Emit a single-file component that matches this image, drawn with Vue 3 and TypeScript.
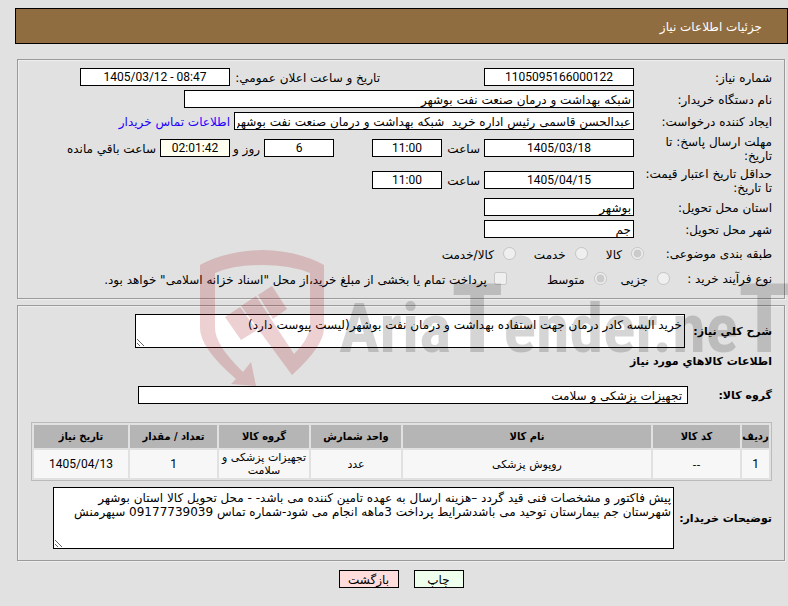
<script setup lang="ts">
import { ref } from 'vue'

interface Option {
  label: string
  value: string
}

interface Item {
  row: number
  code: string
  name: string
  unit: string
  group: string
  quantity: number
  date: string
}

const categories: Option[] = [
  { label: 'کالا', value: 'goods' },
  { label: 'خدمت', value: 'service' },
  { label: 'کالا/خدمت', value: 'both' },
]
const processes: Option[] = [
  { label: 'جزیی', value: 'minor' },
  { label: 'متوسط', value: 'medium' },
]
const category = ref('goods')
const process = ref('medium')

const items: Item[] = [
  {
    row: 1,
    code: '--',
    name: 'روپوش پزشکی',
    unit: 'عدد',
    group: 'تجهیزات پزشکی و سلامت',
    quantity: 1,
    date: '1405/04/13',
  },
]

const buyerNotes =
  'پیش فاکتور و مشخصات فنی قید گردد –هزینه ارسال به عهده تامین کننده می باشد- - محل تحویل کالا استان بوشهر شهرستان جم بیمارستان توحید می باشدشرایط پرداخت 3ماهه انجام می شود-شماره تماس 09177739039 سپهرمنش'
</script>

<template>
  <main class="page" dir="rtl">
    <header class="title">
      <h1>جزئیات اطلاعات نیاز</h1>
    </header>

    <section class="panel request">
      <div class="row">
        <label class="label" for="number">شماره نیاز:</label>
        <input id="number" class="w150 num" value="1105095166000122" readonly />
        <label class="announce" for="announced">تاریخ و ساعت اعلان عمومي:</label>
        <input id="announced" class="w150 num" dir="ltr" value="1405/03/12 - 08:47" readonly />
      </div>
      <div class="row">
        <label class="label" for="agency">نام دستگاه خریدار:</label>
        <input id="agency" class="w450" value="شبکه بهداشت و درمان صنعت نفت بوشهر" readonly />
      </div>
      <div class="row">
        <label class="label" for="creator">ایجاد کننده درخواست:</label>
        <input
          id="creator"
          class="w400"
          value="عبدالحسن قاسمی رئیس اداره خرید  شبکه بهداشت و درمان صنعت نفت بوشهر"
          readonly
        />
        <a href="#">اطلاعات تماس خریدار</a>
      </div>
      <div class="row tall">
        <label class="label" for="deadline">مهلت ارسال پاسخ: تا تاریخ:</label>
        <input id="deadline" class="w150 num" value="1405/03/18" readonly />
        <label class="hour" for="deadline-time">ساعت</label>
        <input id="deadline-time" class="w70 num" value="11:00" readonly />
        <input id="days" class="w70 num days" value="6" readonly />
        <label class="and" for="days">روز و</label>
        <input id="left" class="w70 num left" value="02:01:42" readonly />
        <label for="left">ساعت باقي مانده</label>
      </div>
      <div class="row tall">
        <label class="label" for="validity">حداقل تاریخ اعتبار قیمت: تا تاریخ:</label>
        <input id="validity" class="w150 num" value="1405/04/15" readonly />
        <label class="hour" for="validity-time">ساعت</label>
        <input id="validity-time" class="w70 num" value="11:00" readonly />
      </div>
      <div class="row">
        <label class="label" for="province">استان محل تحویل:</label>
        <input id="province" class="w150" value="بوشهر" readonly />
      </div>
      <div class="row">
        <label class="label" for="city">شهر محل تحویل:</label>
        <input id="city" class="w150" value="جم" readonly />
      </div>
      <div class="row options category" role="radiogroup" aria-labelledby="category-label">
        <span id="category-label">طبقه بندی موضوعی:</span>
        <label v-for="o in categories" :key="o.value" class="option">
          <input v-model="category" type="radio" name="category" :value="o.value" disabled />
          <span>{{ o.label }}</span>
        </label>
      </div>
      <div class="row options process" role="radiogroup" aria-labelledby="process-label">
        <span id="process-label">نوع فرآیند خرید :</span>
        <label v-for="o in processes" :key="o.value" class="option">
          <input v-model="process" type="radio" name="process" :value="o.value" disabled />
          <span>{{ o.label }}</span>
        </label>
        <label class="option treasury">
          <input type="checkbox" disabled />
          <span>پرداخت تمام یا بخشی از مبلغ خرید،از محل "اسناد خزانه اسلامی" خواهد بود.</span>
        </label>
      </div>
    </section>

    <section class="panel goods">
      <div class="field overview">
        <label for="summary">شرح کلي نياز:</label>
        <textarea id="summary" class="summary">خرید البسه کادر درمان جهت استفاده بهداشت و درمان نفت بوشهر(لیست پیوست دارد)</textarea>
      </div>
      <h2>اطلاعات کالاهاي مورد نياز</h2>
      <div class="field group">
        <label for="group">گروه کالا:</label>
        <input id="group" value="تجهیزات پزشکی و سلامت" readonly />
      </div>
      <table>
        <thead>
          <tr>
            <th class="c-row">ردیف</th>
            <th class="c-code">کد کالا</th>
            <th>نام کالا</th>
            <th class="c-unit">واحد شمارش</th>
            <th class="c-unit">گروه کالا</th>
            <th class="c-code">تعداد / مقدار</th>
            <th class="c-date">تاریخ نیاز</th>
          </tr>
        </thead>
        <tbody>
          <tr v-for="i in items" :key="i.row">
            <td class="num">{{ i.row }}</td>
            <td>{{ i.code }}</td>
            <td>{{ i.name }}</td>
            <td>{{ i.unit }}</td>
            <td>{{ i.group }}</td>
            <td class="num">{{ i.quantity }}</td>
            <td class="num">{{ i.date }}</td>
          </tr>
        </tbody>
      </table>
      <div class="field remarks">
        <label for="notes">توضیحات خریدار:</label>
        <textarea id="notes" class="notes" :value="buyerNotes"></textarea>
      </div>
    </section>

    <div class="actions">
      <button type="button" class="print">چاپ</button>
      <button type="button" class="back">بازگشت</button>
    </div>

    <svg class="watermark" width="588" height="140" viewBox="0 0 588 140" direction="ltr" aria-hidden="true">
      <g fill="#a5141e" fill-opacity="0.2">
        <path
          d="M0 15Q25 1 62 0Q99 1 124 15V78Q124 96 92 125L41 56L56 46L94 104Q110 88 110 75V23Q90 15 62 15Q34 15 15 23V78Q15 95 43 122L51 112L56 136L31 134L36 129Q0 98 0 78Z"
        />
        <path d="M25 67L40 57L57 80L41 90Z" />
        <path d="M58 45L72 36L87 59L73 69Z" />
      </g>
      <text class="brand" x="139" y="102" opacity="0.16">Aria<tspan class="cap">T</tspan>ender.ne<tspan class="cap">T</tspan></text>
    </svg>
  </main>
</template>

<style>
body {
  margin: 0;
  background: #e1e1e1;
}
</style>

<style scoped>
.page {
  position: relative;
  box-sizing: border-box;
  padding: 8px 0 18px;
  overflow: hidden;
  color: #000;
  font: 12px/14px 'DejaVu Sans', sans-serif;
}
.title {
  box-sizing: border-box;
  display: flex;
  align-items: center;
  height: 36px;
  margin-left: 15px;
  padding: 2px 25px 0;
  border: 1px solid #000;
  background: #8f6d40;
  color: #fff;
}
h1 {
  margin: 0;
  font-size: 12px;
  font-weight: normal;
}
.panel {
  margin: 0 3px 6px 17px;
  border: 1px solid #9a9a9a;
  box-shadow: 1px 1px 0 #eee, inset 1px 1px 0 #eee;
}
.request {
  margin-top: 15px;
  padding: 6px 12px 8px;
}
.goods {
  margin-bottom: 9px;
  padding: 8px 12px 11px 13px;
}
.row {
  display: flex;
  align-items: center;
  gap: 4px;
  height: 22px;
}
.row > label,
.row > a {
  padding-top: 1px;
}
.tall {
  height: 32px;
}
.label {
  flex: none;
  width: 132px;
  margin-left: 2px;
}
input:not([type='radio'], [type='checkbox']),
textarea,
button {
  box-sizing: border-box;
  border: 1px solid #000;
  border-radius: 0;
  background: #fff;
  color: #000;
  font: inherit;
}
input:not([type='radio'], [type='checkbox']) {
  height: 18px;
  padding: 1px 2px 0;
}
.row input.num:not([type='radio'], [type='checkbox']) {
  padding: 0 2px;
  font-family: Roboto, sans-serif;
  text-align: center;
}
td.num {
  font-family: Roboto, sans-serif;
}
.w70 {
  width: 70px;
}
.w150 {
  width: 150px;
}
.w400 {
  width: 400px;
}
.w450 {
  width: 450px;
}
.announce {
  width: 146px;
  margin-right: 100px;
}
.hour {
  width: 34px;
}
.days {
  margin-right: 34px;
}
.and {
  width: 26px;
  white-space: nowrap;
}
.row input.left:not([type='radio'], [type='checkbox']) {
  background: #fffff0;
}
a {
  color: #20f;
  text-decoration: none;
}
.options > span {
  flex: none;
  white-space: nowrap;
}
.category {
  gap: 18px;
  height: 27px;
}
.process {
  gap: 14px;
  height: 23px;
}
.category > span {
  width: 110px;
}
.process > span {
  width: 88px;
}
.options > .option {
  display: flex;
  align-items: center;
  gap: 9px;
  padding: 0;
}
.options > .treasury {
  gap: 7px;
  margin-right: 26px;
}
.option input {
  width: 13px;
  height: 13px;
  margin: 0;
}
.option span {
  padding-top: 3px;
}
.field {
  display: flex;
  align-items: center;
  gap: 4px;
}
.field label {
  flex: none;
  padding-top: 1px;
}
.field label,
h2 {
  font-size: 11px;
  font-weight: bold;
}
.overview label,
.group label {
  width: 83px;
}
.group label {
  margin-left: -3px;
}
.remarks label {
  width: 94px;
}
h2 {
  margin: 0;
  line-height: 28px;
}
textarea {
  margin: 0;
  padding: 3px 2px;
  resize: both;
}
.summary {
  width: 550px;
  height: 34px;
}
.notes {
  width: 621px;
  height: 62px;
}
.group {
  height: 38px;
}
.field.group input:not([type='radio']) {
  width: 550px;
  padding: 1px 5px 0;
}
table {
  width: 100%;
  margin: 8px 0 6px;
  border: 1px solid #bbb;
  border-spacing: 2px;
  table-layout: fixed;
}
th,
td {
  padding: 0;
  text-align: center;
}
th {
  height: 23px;
  background: #b5b5b5;
  font: bold 11px/14px 'DejaVu Sans Condensed', sans-serif;
}
td {
  height: 28px;
  background: #f7f7f7;
  font-size: 11px;
  line-height: 13px;
}
td.num {
  font-size: 12px;
}
.c-row {
  width: 27px;
}
.c-code {
  width: 87px;
}
.c-unit {
  width: 90px;
}
.c-date {
  width: 94px;
}
.actions {
  display: flex;
  justify-content: center;
  gap: 15px;
  margin: 0 3px 0 17px;
}
button {
  height: 18px;
  padding: 1px 0 0;
}
.actions .print {
  width: 50px;
  background: #efe;
}
.actions .back {
  width: 60px;
  background: #fdd;
}
.watermark {
  position: absolute;
  top: 250px;
  right: 0;
  pointer-events: none;
}
.brand {
  font: bold 68px 'Roboto Condensed', 'Liberation Sans Narrow', sans-serif;
}
.cap {
  font-size: 96px;
}
</style>
